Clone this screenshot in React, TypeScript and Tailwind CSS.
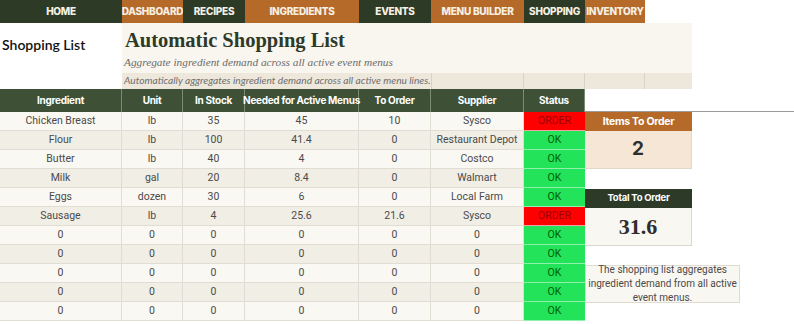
import React from 'react';

const nav = [
  { label: 'HOME', w: 'w-[122px]', dark: true },
  { label: 'DASHBOARD', w: 'w-[61px]', dark: false },
  { label: 'RECIPES', w: 'w-[62px]', dark: true },
  { label: 'INGREDIENTS', w: 'w-[114px]', dark: false },
  { label: 'EVENTS', w: 'w-[72px]', dark: true },
  { label: 'MENU BUILDER', w: 'w-[93px]', dark: false },
  { label: 'SHOPPING', w: 'w-[61px]', dark: true },
  { label: 'INVENTORY', w: 'w-[60px]', dark: false },
];

const headers = ['Ingredient', 'Unit', 'In Stock', 'Needed for Active Menus', 'To Order', 'Supplier', 'Status'];

const rows: string[][] = [
  ['Chicken Breast', 'lb', '35', '45', '10', 'Sysco', 'ORDER'],
  ['Flour', 'lb', '100', '41.4', '0', 'Restaurant Depot', 'OK'],
  ['Butter', 'lb', '40', '4', '0', 'Costco', 'OK'],
  ['Milk', 'gal', '20', '8.4', '0', 'Walmart', 'OK'],
  ['Eggs', 'dozen', '30', '6', '0', 'Local Farm', 'OK'],
  ['Sausage', 'lb', '4', '25.6', '21.6', 'Sysco', 'ORDER'],
  ['0', '0', '0', '0', '0', '0', 'OK'],
  ['0', '0', '0', '0', '0', '0', 'OK'],
  ['0', '0', '0', '0', '0', '0', 'OK'],
  ['0', '0', '0', '0', '0', '0', 'OK'],
  ['0', '0', '0', '0', '0', '0', 'OK'],
];

const noteLines = ['The shopping list aggregates', 'ingredient demand from all active', 'event menus.'];

const sans = { fontFamily: 'Inter, "Noto Sans", sans-serif' };
const body = { fontFamily: 'Roboto, Inter, sans-serif' };
const serif = { fontFamily: '"Liberation Serif", "DejaVu Serif", serif' };
const calibri = { fontFamily: 'Lato, "Open Sans", sans-serif' };

const tableCols = 'grid grid-cols-[122px_61px_62px_114px_72px_93px_61px]';

export default function App() {
  return (
    <div className="w-[794px] h-[324px] overflow-hidden bg-white" style={sans}>
      {/* nav bar */}
      <div className="flex h-[23px]">
        {nav.map((n) => (
          <div
            key={n.label}
            className={`${n.w} flex items-center justify-center text-[10px] font-extrabold tracking-tight text-[#f6f0e4] ${
              n.dark ? 'bg-[#2d3b26]' : 'bg-[#b66a2a]'
            }`}
          >
            {n.label}
          </div>
        ))}
      </div>

      {/* title block */}
      <div className="flex h-[66px]">
        <div className="w-[122px] pl-[2px] pt-[11px] text-[14px] font-semibold text-[#111]" style={calibri}>
          Shopping List
        </div>
        <div className="w-[570px] flex flex-col">
          <div className="h-[29px] bg-[#f9f6f0] flex items-end pl-[3px] text-[20.5px] font-bold leading-none pb-[2px] text-[#2e3a28]" style={serif}>
            Automatic Shopping List
          </div>
          <div className="h-[21px] bg-[#f9f6f0] flex items-center pl-[2px] text-[11.3px] italic text-[#6b6b6b]" style={serif}>
            Aggregate ingredient demand across all active event menus
          </div>
          <div className="h-[16px] flex bg-[#ede7dc]">
            <div className="w-[310px] border-r border-[#d8d2c6] flex items-center pl-[2px] text-[10.2px] italic text-[#6f6f6f] whitespace-nowrap" style={calibri}>
              Automatically aggregates ingredient demand across all active menu lines.
            </div>
            <div className="w-[92px] border-r border-[#d8d2c6]" />
            <div className="w-[61px] border-r border-[#d8d2c6]" />
            <div className="w-[60px] border-r border-[#d8d2c6]" />
            <div className="flex-1" />
          </div>
        </div>
      </div>

      <div className="flex">
        {/* table */}
        <div className="w-[585px]">
          <div className={`${tableCols} h-[23px] bg-[#3e5136]`}>
            {headers.map((h) => (
              <div
                key={h}
                className="border-r border-[#7d8a74] flex items-center justify-center text-[10px] font-bold tracking-[-0.3px] text-white whitespace-nowrap"
              >
                {h}
              </div>
            ))}
          </div>
          {rows.map((r, i) => (
            <div key={i} className={`${tableCols} h-[19px]`} style={body}>
              {r.slice(0, 6).map((c, j) => (
                <div
                  key={j}
                  className={`flex items-center justify-center border-r border-b border-[#e2ddd3] text-[10.5px] text-[#4a4a4a] whitespace-nowrap ${
                    i % 2 === 0 ? 'bg-[#faf8f3]' : 'bg-[#f1eee6]'
                  }`}
                >
                  {c}
                </div>
              ))}
              <div
                className={`flex items-center justify-center border-b text-[10.5px] ${
                  r[6] === 'ORDER'
                    ? 'bg-[#ff0000] text-[#9c0006] border-[#f3a0a0]'
                    : 'bg-[#22e35a] text-[#006100] border-[#8ff0aa]'
                }`}
              >
                {r[6]}
              </div>
            </div>
          ))}
        </div>

        {/* summary panels */}
        <div className="flex-1 flex flex-col">
          <div className="h-[23px] border-b border-[#9a9a9a]" />
          <div className="w-[107px] h-[19px] bg-[#b66a2a] flex items-center justify-center text-[10.5px] font-bold tracking-tight text-white">
            Items To Order
          </div>
          <div className="w-[107px] h-[38px] bg-[#f5e6d6] border-b border-r border-[#e2d8c8] flex items-center justify-center text-[19px] font-bold text-[#2f2f2f]">
            2
          </div>
          <div className="h-[20px]" />
          <div className="w-[107px] h-[19px] bg-[#2d3a27] flex items-center justify-center text-[9.5px] font-bold tracking-tight text-white">
            Total To Order
          </div>
          <div
            className="w-[107px] h-[38px] bg-[#f9f7f1] border-r border-b border-[#dcd7cd] flex items-center justify-center text-[22px] font-bold text-[#2e2e2e]"
            style={serif}
          >
            31.6
          </div>
          <div className="h-[19px]" />
          <div
            className="w-[155px] h-[38px] bg-[#f9f7f1] border border-[#e0dbd1] flex flex-col items-center justify-center text-[10px] leading-[14px] text-[#4a4a4a]"
            style={body}
          >
            {noteLines.map((l) => (
              <span key={l} className="whitespace-nowrap">
                {l}
              </span>
            ))}
          </div>
        </div>
      </div>
    </div>
  );
}
